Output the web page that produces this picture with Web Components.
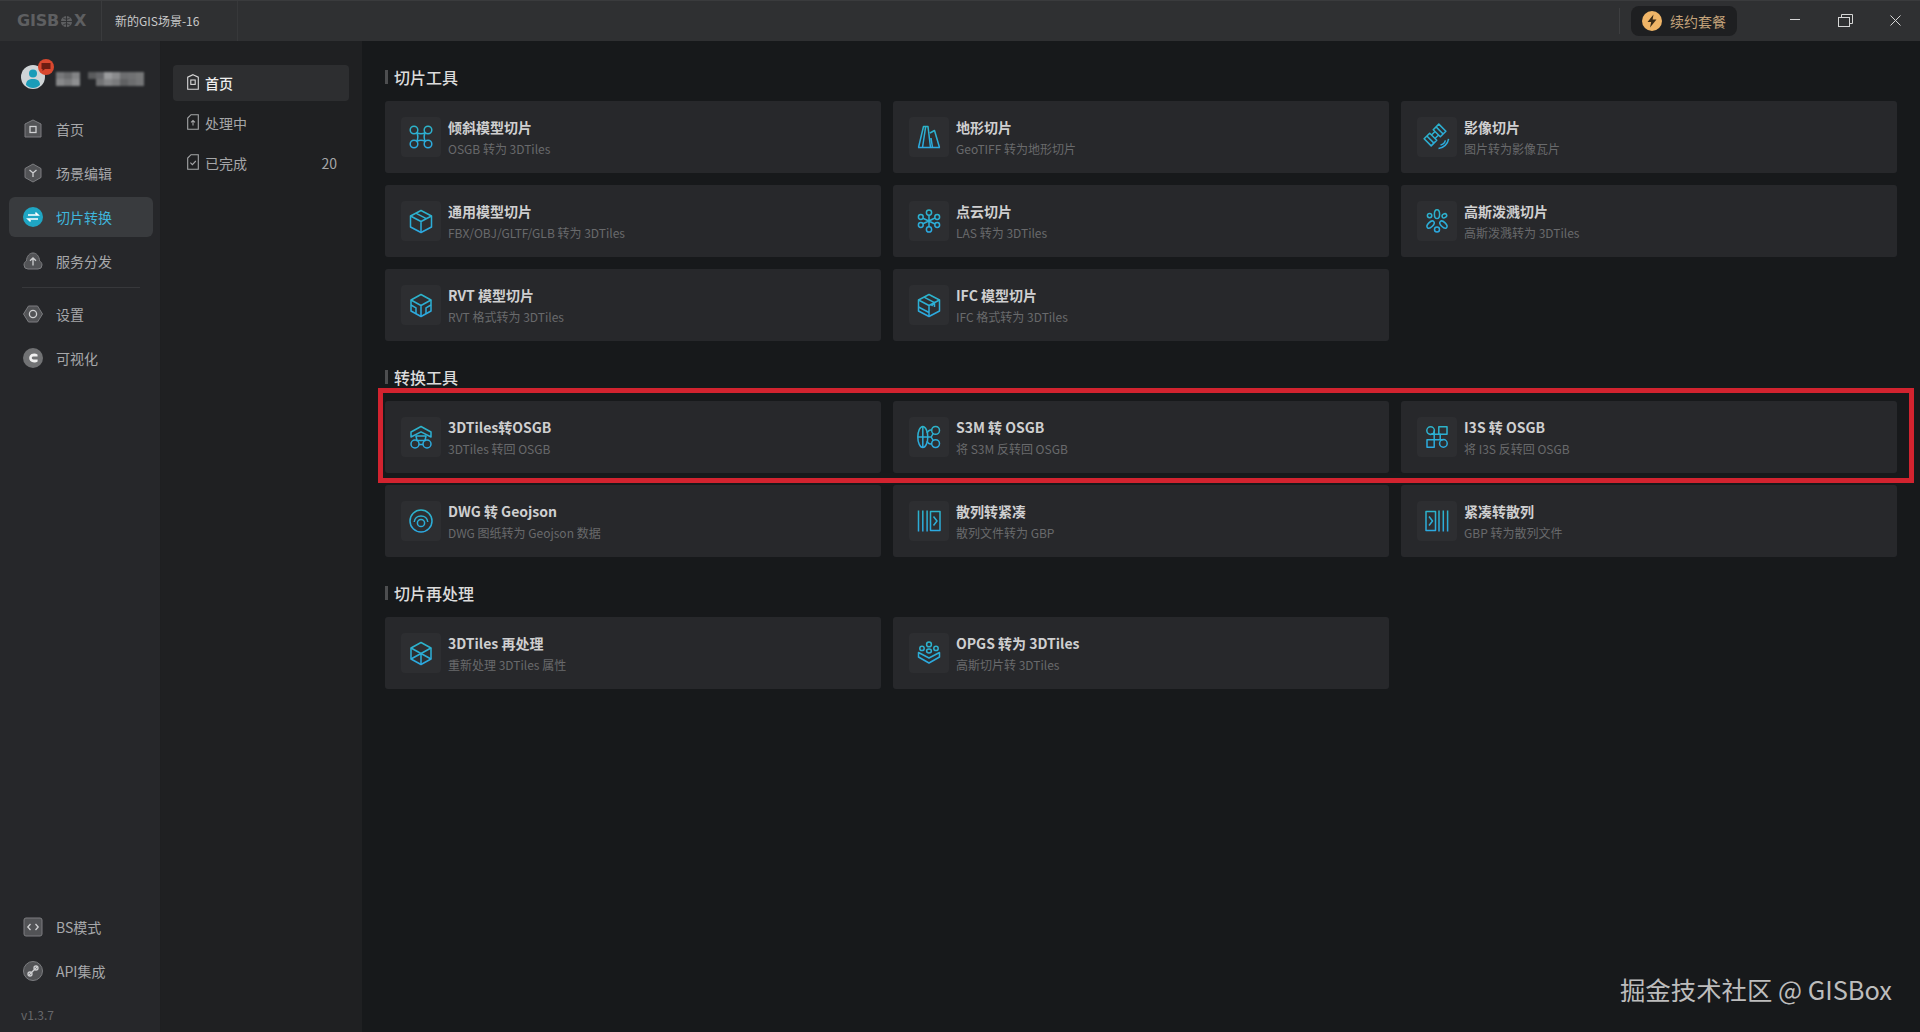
<!DOCTYPE html>
<html lang="zh">
<head>
<meta charset="utf-8">
<title>GISBox</title>
<style>
html, body { margin: 0; height: 100%; background: #17191b; overflow: hidden; }
body { font-family: "Noto Sans CJK SC", "Noto Sans", sans-serif; font-size: 14px; color: #a5a6a8; }
</style>
</head>
<body>
<gis-app>
	<title-bar slot="top" scene="新的GIS场景-16" renew="续约套餐"></title-bar>

	<side-nav slot="side">
		<span slot="version">v1.3.7</span>
		<nav-item icon="home">首页</nav-item>
		<nav-item icon="scene">场景编辑</nav-item>
		<nav-item icon="convert" active>切片转换</nav-item>
		<nav-item icon="cloud">服务分发</nav-item>
		<nav-rule></nav-rule>
		<nav-item icon="gear">设置</nav-item>
		<nav-item icon="visual">可视化</nav-item>
		<nav-item slot="bottom" icon="code">BS模式</nav-item>
		<nav-item slot="bottom" icon="api">API集成</nav-item>
	</side-nav>

	<sub-nav slot="sub">
		<sub-item icon="home" active>首页</sub-item>
		<sub-item icon="up">处理中</sub-item>
		<sub-item icon="done" count="20">已完成</sub-item>
	</sub-nav>

	<tool-section heading="切片工具">
		<tool-card icon="drone"><span slot="name">倾斜模型切片</span><span slot="desc">OSGB 转为 3DTiles</span></tool-card>
		<tool-card icon="terrain"><span slot="name">地形切片</span><span slot="desc">GeoTIFF 转为地形切片</span></tool-card>
		<tool-card icon="satellite"><span slot="name">影像切片</span><span slot="desc">图片转为影像瓦片</span></tool-card>
		<tool-card icon="cube"><span slot="name">通用模型切片</span><span slot="desc">FBX/OBJ/GLTF/GLB 转为 3DTiles</span></tool-card>
		<tool-card icon="points"><span slot="name">点云切片</span><span slot="desc">LAS 转为 3DTiles</span></tool-card>
		<tool-card icon="splat"><span slot="name">高斯泼溅切片</span><span slot="desc">高斯泼溅转为 3DTiles</span></tool-card>
		<tool-card icon="rvt"><span slot="name">RVT 模型切片</span><span slot="desc">RVT 格式转为 3DTiles</span></tool-card>
		<tool-card icon="ifc"><span slot="name">IFC 模型切片</span><span slot="desc">IFC 格式转为 3DTiles</span></tool-card>
	</tool-section>

	<tool-section heading="转换工具">
		<tool-card icon="tiles"><span slot="name">3DTiles转OSGB</span><span slot="desc">3DTiles 转回 OSGB</span></tool-card>
		<tool-card icon="s3m"><span slot="name">S3M 转 OSGB</span><span slot="desc">将 S3M 反转回 OSGB</span></tool-card>
		<tool-card icon="i3s"><span slot="name">I3S 转 OSGB</span><span slot="desc">将 I3S 反转回 OSGB</span></tool-card>
		<tool-card icon="dwg"><span slot="name">DWG 转 Geojson</span><span slot="desc">DWG 图纸转为 Geojson 数据</span></tool-card>
		<tool-card icon="pack"><span slot="name">散列转紧凑</span><span slot="desc">散列文件转为 GBP</span></tool-card>
		<tool-card icon="unpack"><span slot="name">紧凑转散列</span><span slot="desc">GBP 转为散列文件</span></tool-card>
	</tool-section>

	<tool-section heading="切片再处理">
		<tool-card icon="reprocess"><span slot="name">3DTiles 再处理</span><span slot="desc">重新处理 3DTiles 属性</span></tool-card>
		<tool-card icon="opgs"><span slot="name">OPGS 转为 3DTiles</span><span slot="desc">高斯切片转 3DTiles</span></tool-card>
	</tool-section>

	<red-frame slot="over"></red-frame>
	<water-mark slot="over">掘金技术社区 @ GISBox</water-mark>
</gis-app>

<script>
(function() {
	// card icons, drawn on a 24x24 box, stroked with the teal gradient
	const toolIcons = {
		drone: `<circle cx="5" cy="5" r="3.8"/><circle cx="19" cy="5" r="3.8"/><circle cx="5" cy="19" r="3.8"/><circle cx="19" cy="19" r="3.8"/><path d="M7.7 7.7Q12 10 16.3 7.7Q14 12 16.3 16.3Q12 14 7.7 16.3Q10 12 7.7 7.7Z"/>`,
		terrain: `<path d="M1 22.5H23M1.5 22.5L6.5 1.5H11L13.5 22.5M5.5 22.5L8.7 1.5M13 8L17.5 5.5L22.5 22.5M15.5 22.5L14 13"/>`,
		satellite: `<g transform="rotate(-45 10 10)"><path d="M-.4 5H7.5V15H-.4ZM12.5 5H20.4V15H12.5ZM7.5 7.5H12.5V12.5H7.5Z"/><path d="M3.5 5V15M16.5 5V15"/></g><path d="M15.5 20C18 19.6 19.8 17.8 20.4 15.4M13.5 23.4C18.6 23 22.8 19 23.6 13.8"/>`,
		cube: `<path d="M12 1.5L22.5 7V18L12 23.5L1.5 18V7Z"/><path d="M1.5 7L12 12.5L22.5 7M12 12.5V23.5M6.8 4.2L17.3 9.7"/>`,
		points: `<circle cx="12" cy="3.6" r="2.6"/><circle cx="3.8" cy="8" r="2.4"/><circle cx="20.2" cy="8" r="2.4"/><circle cx="3.8" cy="16" r="2.4"/><circle cx="20.2" cy="16" r="2.4"/><circle cx="12" cy="20.4" r="2.6"/><path d="M12 6.2V17.8M6 9.2L18 15M6 14.8L18 9"/>`,
		splat: `<ellipse cx="12" cy="5.2" rx="2.6" ry="4.4"/><circle cx="4.6" cy="6.6" r="2.2"/><ellipse cx="19.4" cy="6.8" rx="2.4" ry="1.9" transform="rotate(-30 19.4 6.8)"/><ellipse cx="5.6" cy="15.6" rx="4.4" ry="2.4" transform="rotate(-45 5.6 15.6)"/><ellipse cx="18.4" cy="15.6" rx="4.4" ry="2.4" transform="rotate(45 18.4 15.6)"/><circle cx="12" cy="20.4" r="2.5"/>`,
		rvt: `<path d="M12 1.5L22 7V18L12 23.5L2 18V7Z"/><path d="M2 7L12 12.5L22 7M12 12.5V23.5"/><path d="M2 12L7 14.8V20.8M22 12L17 14.8V20.8"/>`,
		ifc: `<path d="M12 1.5L22.5 7V18L12 23.5L1.5 18V7Z"/><path d="M1.5 7L12 12.5L22.5 7M12 12.5V23.5M1.5 14L12 19.5M7 4.2L17.5 9.7V14M17.5 9.7L14.6 13"/>`,
		tiles: `<path d="M2 12V7L12 1.5L22 7V12L12 6.8Z"/><path d="M7 11H17L16 15.5H8Z"/><circle cx="6" cy="19" r="4"/><circle cx="18" cy="19" r="4"/><path d="M10 19.5H14M8 15.5L7.5 15.2M16 15.5L16.5 15.2"/>`,
		s3m: `<ellipse cx="5.8" cy="12" rx="5" ry="10.5"/><path d="M5.8 1.5V22.5M1 12H14.2L16.2 8.3M14.2 12L16.2 15.7"/><circle cx="18.6" cy="5.4" r="3.9"/><circle cx="18.6" cy="18.6" r="3.9"/><path d="M10 8C11 5.6 12.6 4.6 14.7 5M10 16C11 18.4 12.6 19.4 14.7 19"/>`,
		i3s: `<circle cx="5.6" cy="5.6" r="3.8"/><path d="M13.8 1.8H22V9.2H13.8ZM2 14.8H9.2V22.2H2Z"/><circle cx="18.4" cy="18.4" r="3.8"/><path d="M9.2 5.6V14.8M5.6 9.2H15.2V15.5M9.2 14.8H18.4"/>`,
		dwg: `<circle cx="12" cy="12" r="11"/><circle cx="12" cy="14" r="3.6"/><path d="M5.2 13C5.6 9.4 8.4 7 12 7C15.6 7 18.4 9.4 18.8 13"/>`,
		pack: `<path d="M1.5 1.5V22.5M5.8 1.5V22.5M10.1 1.5V22.5"/><path d="M13.5 2.5H23V21.5H13.5Z"/><path d="M16.5 7.5L20 12L16.5 16.5"/>`,
		unpack: `<path d="M1 2.5H10.5V21.5H1Z"/><path d="M4 7.5L7.5 12L4 16.5"/><path d="M14 1.5V22.5M18.3 1.5V22.5M22.6 1.5V22.5"/>`,
		reprocess: `<path d="M12 1.5L22 7V18L12 23.5L2 18V7Z"/><path d="M2 7L22 18M22 7L2 18M12 12.5V23.5"/>`,
		opgs: `<circle cx="12" cy="3.4" r="2.4"/><circle cx="5" cy="7.4" r="2.2"/><circle cx="19" cy="7.4" r="2.2"/><ellipse cx="12" cy="10" rx="2.4" ry="1.9"/><path d="M1.5 11.5L12 17L22.5 11.5V16L12 22L1.5 16Z"/>`
	};

	// sidebar icons, 20x20, mostly a grey plate with a light mark on it
	const plate = 'fill="#525356" stroke="#7c7d80" stroke-width="1"';
	const mark = 'fill="none" stroke="#cfd0d2" stroke-width="1.3"';
	const navIcons = {
		home: `<path d="M10 1L18 5V18H2V5Z" ${plate}/><rect x="7" y="7.5" width="6" height="6" ${mark}/>`,
		scene: `<path d="M10 1L18 5.5V14.5L10 19L2 14.5V5.5Z" ${plate}/><path d="M6.5 7L10 10L13.5 7M10 10V14" ${mark}/>`,
		convert: `<circle cx="10" cy="10" r="10" fill="#1fa6c4"/><path d="M5 8H15L12.4 5.6M15 12H5L7.6 14.4" fill="none" stroke="#fff" stroke-width="1.5"/>`,
		cloud: `<path d="M5 18A4 4 0 0 1 1 14C1 12 2 10.8 3.4 10C3.8 5 6.5 2 10 2C13.5 2 16.2 5 16.6 10C18 10.8 19 12 19 14A4 4 0 0 1 15 18Z" ${plate}/><path d="M10 14.5V7M7 9.8L10 7L13 9.8" ${mark}/>`,
		gear: `<path d="M5.5 2H14.5L19.5 10L14.5 18H5.5L0.5 10Z" ${plate}/><circle cx="10" cy="10" r="3.6" ${mark}/>`,
		visual: `<circle cx="10" cy="10" r="10" fill="#717274"/><path d="M14.5 6.5C12 4.8 8 5.4 6.6 8C5.6 10 6.4 13 9 14C11 14.8 13.4 14.2 14.6 13.4V11.4H10.4C9.4 11.4 8.8 10.8 8.8 10C8.8 9.2 9.4 8.6 10.4 8.6H14.6Z" fill="#f0f0f0"/>`,
		code: `<rect x="1" y="1" width="18" height="18" rx="2" ${plate}/><path d="M7.5 7L4.8 10L7.5 13M12.5 7L15.2 10L12.5 13" ${mark}/>`,
		api: `<circle cx="10" cy="10" r="9.5" ${plate}/><path d="M6 14L14 6" ${mark}/><circle cx="7" cy="13" r="2" ${mark}/><circle cx="13" cy="7" r="2" ${mark}/>`
	};

	// sub panel icons, 12x16 page outlines
	const pageOutline = (stroke) => `<path d="M4 .7H11.3V15.3H.7V4Z" fill="none" stroke="${stroke}" stroke-width="1.1"/>`;
	const subIcons = {
		home: (c) => `<path d="M6 .7L11.3 3.2V15.3H.7V3.2Z" fill="none" stroke="${c}" stroke-width="1.1"/><rect x="3.8" y="6" width="4.4" height="4.4" fill="none" stroke="${c}" stroke-width="1.1"/>`,
		up: (c) => pageOutline(c) + `<path d="M6 11.5V6.5M4 8.4L6 6.5L8 8.4" fill="none" stroke="${c}" stroke-width="1.1"/>`,
		done: (c) => pageOutline(c) + `<path d="M3.4 8.6L5.4 10.6L8.8 7" fill="none" stroke="${c}" stroke-width="1.1"/>`
	};

	const gisAppTemplate = document.createElement("template");
	gisAppTemplate.innerHTML = `
		<style>
		:host {
			display: grid;
			grid-template-columns: 161px 201px 1fr;
			grid-template-rows: 41px 1fr;
			position: relative;
			width: 1920px;
			height: 1032px;
			overflow: hidden;
			background: #17191b;
		}
		.top { grid-column: 1 / 4; min-height: 0; }
		main {
			padding: 24px 23px 0 23px;
			display: flex;
			flex-direction: column;
			gap: 24px;
			min-width: 0;
		}
		</style>
		<div class="top"><slot name="top"></slot></div>
		<slot name="side"></slot>
		<slot name="sub"></slot>
		<main><slot></slot></main>
		<slot name="over"></slot>
	`;

	class GisApp extends HTMLElement {
		constructor() {
			super();
			this.attachShadow({mode: "open"}).appendChild(gisAppTemplate.content.cloneNode(true));
		}
	}

	const titleBarTemplate = document.createElement("template");
	titleBarTemplate.innerHTML = `
		<style>
		:host {
			display: flex;
			align-items: center;
			height: 41px;
			box-sizing: border-box;
			background: #2f3032;
			border-top: 1px solid #3a3b3d;
			color: #c9c9ca;
		}
		.logo {
			display: flex;
			align-items: center;
			width: 102px;
			height: 100%;
			box-sizing: border-box;
			padding-left: 17px;
			border-right: 1px solid #3a3b3d;
			color: #5e5f61;
			font: bold 16px/1 "DejaVu Sans", sans-serif;
			letter-spacing: -.2px;
		}
		.logo svg { margin: 0 1px; flex: none; }
		.scene {
			width: 136px;
			height: 100%;
			box-sizing: border-box;
			padding-left: 13px;
			border-right: 1px solid #37383a;
			font-size: 12px;
			line-height: 40px;
			white-space: nowrap;
		}
		.right { margin-left: auto; display: flex; align-items: center; height: 100%; }
		.sep { width: 1px; height: 26px; background: #3d3e40; margin-right: 11px; }
		.renew {
			display: flex;
			align-items: center;
			gap: 8px;
			width: 106px;
			height: 30px;
			box-sizing: border-box;
			padding-left: 11px;
			border-radius: 8px;
			background: #1e1f21;
			color: #c3a27a;
			font-size: 14px;
			margin-right: 33px;
		}
		.win { width: 50px; height: 100%; display: flex; align-items: center; justify-content: center; }
		.win svg { margin-top: -2px; }
		</style>
		<div class="logo">GISB<svg width="13" height="13" viewBox="0 0 14 14"><circle cx="7" cy="7" r="6" fill="#5e5f61"/><path d="M1 7H13M7 1V13M3 2.8C5.5 5 8.5 5 11 2.8M3 11.2C5.5 9 8.5 9 11 11.2" stroke="#2f3032" fill="none"/></svg>X</div>
		<div class="scene" id="scene"></div>
		<div class="right">
			<div class="sep"></div>
			<div class="renew">
				<svg width="20" height="20" viewBox="0 0 20 20"><circle cx="10" cy="10" r="10" fill="#f0b567"/><path d="M11.5 3.5L5.5 11H9.2L8 16.5L14.5 8.6H10.6Z" fill="#3a2a16"/></svg>
				<span id="renew"></span>
			</div>
			<div class="win"><svg width="10" height="2"><rect width="10" height="1" fill="#d6d6d6"/></svg></div>
			<div class="win"><svg width="15" height="13" viewBox="0 0 15 13" fill="none" stroke="#d6d6d6"><path d="M3.5 3V.5H14.5V9.5H11.5"/><rect x=".5" y="3.5" width="11" height="9"/></svg></div>
			<div class="win"><svg width="11" height="11" viewBox="0 0 11 11" stroke="#d6d6d6"><path d="M.5 .5L10.5 10.5M10.5 .5L.5 10.5"/></svg></div>
		</div>
	`;

	class TitleBar extends HTMLElement {
		constructor() {
			super();
			this._shadowRoot = this.attachShadow({mode: "open"});
			this._shadowRoot.appendChild(titleBarTemplate.content.cloneNode(true));
		}

		connectedCallback() {
			this._shadowRoot.getElementById("scene").textContent = this.getAttribute("scene");
			this._shadowRoot.getElementById("renew").textContent = this.getAttribute("renew");
		}
	}

	const sideNavTemplate = document.createElement("template");
	sideNavTemplate.innerHTML = `
		<style>
		:host {
			display: flex;
			flex-direction: column;
			min-height: 0;
			box-sizing: border-box;
			background: #26272a;
			border-right: 1px solid #1e1f21;
		}
		.user { position: relative; height: 68px; flex: none; }
		.avatar { position: absolute; left: 21px; top: 24px; width: 24px; height: 24px; }
		.badge { position: absolute; left: 38px; top: 18px; width: 16px; height: 16px; }
		.name {
			position: absolute;
			left: 56px;
			top: 31px;
			display: grid;
			grid-template-columns: repeat(11, 8px);
			grid-auto-rows: 7px;
			filter: blur(1px);
		}
		.name i { display: block; }
		.list { display: flex; flex-direction: column; gap: 4px; }
		.bottom { margin-top: auto; display: flex; flex-direction: column; gap: 4px; }
		.version { padding: 16px 0 9px 21px; font-size: 12px; line-height: 16px; color: #67686a; }
		</style>
		<div class="user">
			<svg class="avatar" viewBox="0 0 24 24"><circle cx="12" cy="12" r="12" fill="#cfd4d6"/><circle cx="12" cy="8.5" r="4" fill="#1a9cb8"/><path d="M5 20C5 15.5 8 14 12 14C16 14 19 15.5 19 20C17 22 14.5 23 12 23C9.5 23 7 22 5 20Z" fill="#1a9cb8"/></svg>
			<svg class="badge" viewBox="0 0 16 16"><circle cx="8" cy="8" r="8" fill="#d9482f"/><path d="M3.5 4H12.5V10H7L4.5 12V10H3.5Z" fill="#6d1d12"/></svg>
			<div class="name" id="name"></div>
		</div>
		<div class="list"><slot></slot></div>
		<div class="bottom"><slot name="bottom"></slot></div>
		<div class="version"><slot name="version"></slot></div>
	`;

	class SideNav extends HTMLElement {
		constructor() {
			super();
			this._shadowRoot = this.attachShadow({mode: "open"});
			this._shadowRoot.appendChild(sideNavTemplate.content.cloneNode(true));
			// the user name is pixelated out in the screenshot
			const cells = [
				"#77787a", "#6a6b6d", "#828385", "transparent", "#5a5b5d", "#66676a", "#9a9b9d", "#8a8b8d", "#6d6e70", "#707173", "#777879",
				"#88898b", "#7b7c7e", "#8e8f91", "transparent", "transparent", "#727375", "#858688", "#7a7b7d", "#606163", "#6c6d6f", "#757678"
			];
			const name = this._shadowRoot.getElementById("name");
			cells.forEach((color) => {
				const cell = document.createElement("i");
				cell.style.background = color;
				name.appendChild(cell);
			});
		}
	}

	const navItemTemplate = document.createElement("template");
	navItemTemplate.innerHTML = `
		<style>
		:host {
			display: flex;
			align-items: center;
			gap: 13px;
			width: 144px;
			height: 40px;
			margin-left: 9px;
			box-sizing: border-box;
			padding-left: 14px;
			border-radius: 6px;
			font-size: 14px;
			color: #a7a8aa;
			white-space: nowrap;
		}
		:host([active]) { background: #393b3e; color: #3fb6dd; }
		svg { width: 20px; height: 20px; flex: none; }
		</style>
		<svg viewBox="0 0 20 20" id="icon"></svg><slot></slot>
	`;

	class NavItem extends HTMLElement {
		constructor() {
			super();
			this._shadowRoot = this.attachShadow({mode: "open"});
			this._shadowRoot.appendChild(navItemTemplate.content.cloneNode(true));
		}

		connectedCallback() {
			this._shadowRoot.getElementById("icon").innerHTML = navIcons[this.getAttribute("icon")];
		}
	}

	class NavRule extends HTMLElement {
		constructor() {
			super();
			this.attachShadow({mode: "open"}).innerHTML = `
				<style>
				:host { display: block; height: 5px; margin: 0 20px 0 22px; }
				div { height: 1px; background: #37383b; margin-top: 2px; }
				</style>
				<div></div>
			`;
		}
	}

	class SubNav extends HTMLElement {
		constructor() {
			super();
			this.attachShadow({mode: "open"}).innerHTML = `
				<style>
				:host {
					display: flex;
					flex-direction: column;
					gap: 4px;
					box-sizing: border-box;
					padding: 24px 13px 0 12px;
					background: #1f2022;
				}
				</style>
				<slot></slot>
			`;
		}
	}

	const subItemTemplate = document.createElement("template");
	subItemTemplate.innerHTML = `
		<style>
		:host {
			display: flex;
			align-items: center;
			gap: 6px;
			height: 36px;
			box-sizing: border-box;
			padding: 0 12px 0 14px;
			border-radius: 4px;
			font-size: 14px;
			color: #a5a6a8;
		}
		:host([active]) { background: #2d2e30; color: #eeeeee; font-weight: 500; }
		svg { width: 12px; height: 16px; flex: none; margin-top: -2px; }
		.count { margin-left: auto; }
		</style>
		<svg viewBox="0 0 12 16" id="icon"></svg><slot></slot><span class="count" id="count"></span>
	`;

	class SubItem extends HTMLElement {
		constructor() {
			super();
			this._shadowRoot = this.attachShadow({mode: "open"});
			this._shadowRoot.appendChild(subItemTemplate.content.cloneNode(true));
		}

		connectedCallback() {
			const color = this.hasAttribute("active") ? "#d8d8d8" : "#a5a6a8";
			this._shadowRoot.getElementById("icon").innerHTML = subIcons[this.getAttribute("icon")](color);
			this._shadowRoot.getElementById("count").textContent = this.getAttribute("count") || "";
		}
	}

	const toolSectionTemplate = document.createElement("template");
	toolSectionTemplate.innerHTML = `
		<style>
		:host { display: block; }
		h2 {
			margin: 0 0 12px 0;
			height: 24px;
			display: flex;
			align-items: center;
			gap: 6px;
			font-size: 16px;
			font-weight: 500;
			line-height: 24px;
			color: #dcdcdc;
		}
		h2::before { content: ""; width: 3px; height: 14px; background: #4d4e50; }
		.grid { display: grid; grid-template-columns: repeat(3, 496px); gap: 12px; }
		</style>
		<h2 id="heading"></h2>
		<div class="grid"><slot></slot></div>
	`;

	class ToolSection extends HTMLElement {
		constructor() {
			super();
			this._shadowRoot = this.attachShadow({mode: "open"});
			this._shadowRoot.appendChild(toolSectionTemplate.content.cloneNode(true));
		}

		connectedCallback() {
			this._shadowRoot.getElementById("heading").textContent = this.getAttribute("heading");
		}
	}

	const toolCardTemplate = document.createElement("template");
	toolCardTemplate.innerHTML = `
		<style>
		:host {
			display: flex;
			align-items: center;
			height: 72px;
			box-sizing: border-box;
			padding-left: 16px;
			gap: 7px;
			background: #27282b;
			border-radius: 3px;
		}
		.icon {
			width: 40px;
			height: 40px;
			flex: none;
			display: flex;
			align-items: center;
			justify-content: center;
			background: #2d2e31;
			border-radius: 4px;
		}
		svg { width: 24px; height: 24px; overflow: visible; fill: none; stroke: url(#teal); stroke-width: 1.5; stroke-linejoin: round; }
		.text { display: flex; flex-direction: column; padding-top: 1px; }
		.name { font-size: 14px; font-weight: 700; line-height: 22px; color: #cfcfd0; white-space: nowrap; }
		.desc { margin-top: 1px; font-size: 12px; line-height: 20px; color: #696a6c; white-space: nowrap; }
		</style>
		<div class="icon">
			<svg viewBox="0 0 24 24">
				<defs><linearGradient id="teal" gradientUnits="userSpaceOnUse" x1="0" y1="0" x2="0" y2="24"><stop offset="0" stop-color="#2cb4c8"/><stop offset="1" stop-color="#2ca8e2"/></linearGradient></defs>
				<g id="art"></g>
			</svg>
		</div>
		<div class="text">
			<div class="name"><slot name="name"></slot></div>
			<div class="desc"><slot name="desc"></slot></div>
		</div>
	`;

	class ToolCard extends HTMLElement {
		constructor() {
			super();
			this._shadowRoot = this.attachShadow({mode: "open"});
			this._shadowRoot.appendChild(toolCardTemplate.content.cloneNode(true));
		}

		connectedCallback() {
			this._shadowRoot.getElementById("art").innerHTML = toolIcons[this.getAttribute("icon")];
		}
	}

	class RedFrame extends HTMLElement {
		constructor() {
			super();
			this.attachShadow({mode: "open"}).innerHTML = `
				<style>
				:host {
					position: absolute;
					left: 378px;
					top: 388px;
					width: 1536px;
					height: 95px;
					box-sizing: border-box;
					border: 5px solid #d2232f;
					pointer-events: none;
				}
				</style>
			`;
		}
	}

	class WaterMark extends HTMLElement {
		constructor() {
			super();
			this.attachShadow({mode: "open"}).innerHTML = `
				<style>
				:host {
					position: absolute;
					right: 28px;
					top: 971px;
					font-size: 25.4px;
					line-height: 36px;
					color: #bdbdbd;
					white-space: nowrap;
				}
				</style>
				<slot></slot>
			`;
		}
	}

	customElements.define("gis-app", GisApp);
	customElements.define("title-bar", TitleBar);
	customElements.define("side-nav", SideNav);
	customElements.define("nav-item", NavItem);
	customElements.define("nav-rule", NavRule);
	customElements.define("sub-nav", SubNav);
	customElements.define("sub-item", SubItem);
	customElements.define("tool-section", ToolSection);
	customElements.define("tool-card", ToolCard);
	customElements.define("red-frame", RedFrame);
	customElements.define("water-mark", WaterMark);
})();
</script>
</body>
</html>
